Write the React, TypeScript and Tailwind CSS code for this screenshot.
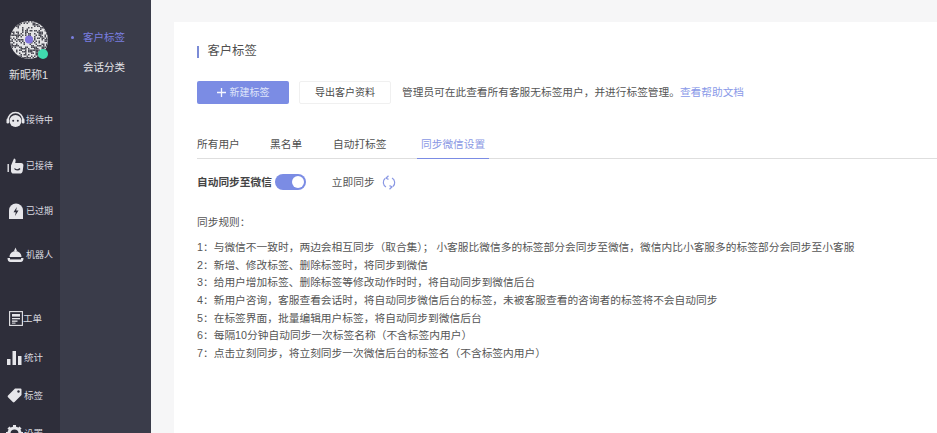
import React from "react";

function QR() {
  const cells: React.ReactNode[] = [];
  let s = 12345;
  for (let y = 0; y < 38; y += 1.5) {
    for (let x = 0; x < 38; x += 1.5) {
      s = (s * 1103515245 + 12345) & 0x7fffffff;
      if ((s >> 16) % 100 < 45) {
        cells.push(<rect key={x + "-" + y} x={x} y={y} width="1.5" height="1.5" fill="#4a4a54" />);
      }
    }
  }
  return (
    <svg width="38" height="38" viewBox="0 0 38 38" className="block">
      <defs>
        <clipPath id="qr"><circle cx="19" cy="19" r="19" /></clipPath>
      </defs>
      <g clipPath="url(#qr)">
        <rect width="38" height="38" fill="#e4e4e6" />
        {cells}
      </g>
      <circle cx="19" cy="18.5" r="4" fill="#8173dd" />
    </svg>
  );
}

const Headset = () => (
  <svg width="19" height="17" viewBox="0 0 19 17">
    <path d="M2 9a7.500 7.500 0 0 1 15 0" fill="none" stroke="#e6e6ea" strokeWidth="1.600" />
    <rect x="0.500" y="7.500" width="2.600" height="5" rx="1.200" fill="#e6e6ea" />
    <rect x="15.900" y="7.500" width="2.600" height="5" rx="1.200" fill="#e6e6ea" />
    <ellipse cx="9.500" cy="10" rx="6" ry="6" fill="#e6e6ea" />
    <circle cx="7.200" cy="9.800" r="1" fill="#2e2e3a" />
    <circle cx="11.800" cy="9.800" r="1" fill="#2e2e3a" />
  </svg>
);
const Thumb = () => (
  <svg width="17" height="17" viewBox="0 0 17 17">
    <rect x="0.500" y="7" width="1.400" height="8" fill="#e6e6ea" />
    <path d="M4 8.500 7 1.500c1.200 0 1.800 1 1.600 2.400L8.200 6H14c1.600 0 2.600 1 2.400 2.600l-.7 5.400c-.2 1.600-1.400 2.600-3 2.600H6.500C5 16.600 4 15.500 4 14z" fill="#e6e6ea" />
    <path d="M7.500 11.500c1.200 1.800 4.200 1.800 5.500 0" fill="none" stroke="#2e2e3a" strokeWidth="1.300" />
  </svg>
);
const Expired = () => (
  <svg width="16" height="16" viewBox="0 0 16 16">
    <path d="M1 16V7.500a7 7 0 0 1 14 0V16z" fill="#e6e6ea" />
    <path d="M8.800 4 5.500 9.200h2.300L7 13l3.500-5.400H8.200z" fill="#2e2e3a" />
  </svg>
);
const Bell = () => (
  <svg width="17" height="16" viewBox="0 0 17 16">
    <path d="M8.500 0.500 10 4H7z" fill="#e6e6ea" />
    <path d="M2.500 10a6 6 0 0 1 12 0z" fill="#e6e6ea" />
    <path d="M0.500 11h16c0 2.500-1 4-3 4H3.500c-2 0-3-1.500-3-4z" fill="#e6e6ea" />
    <rect x="3" y="11" width="11" height="1.400" fill="#2e2e3a" />
  </svg>
);
const Ticket = () => (
  <svg width="14" height="15" viewBox="0 0 14 15">
    <rect x="0.600" y="0.600" width="12.800" height="13.800" fill="none" stroke="#e6e6ea" strokeWidth="1.100" />
    <rect x="3" y="3" width="8" height="2.600" fill="#e6e6ea" />
    <rect x="3" y="7" width="8" height="1.300" fill="#e6e6ea" />
    <rect x="3" y="9.500" width="5.500" height="1.300" fill="#e6e6ea" />
    <rect x="3" y="11.600" width="3.500" height="1" fill="#e6e6ea" />
  </svg>
);
const Bars = () => (
  <svg width="15" height="14" viewBox="0 0 15 14">
    <rect x="0" y="8" width="3.500" height="6" fill="#e6e6ea" />
    <rect x="5.500" y="0" width="3.500" height="14" fill="#e6e6ea" />
    <rect x="11" y="5" width="3.500" height="9" fill="#e6e6ea" />
  </svg>
);
const Tag = () => (
  <svg width="15" height="15" viewBox="0 0 15 15">
    <path d="M8 0.500h5.500a1 1 0 0 1 1 1V7L7.500 14a1.200 1.200 0 0 1-1.700 0L1 9.200a1.200 1.200 0 0 1 0-1.700z" fill="#e6e6ea" />
    <circle cx="11.500" cy="3.500" r="1.200" fill="#2e2e3a" />
  </svg>
);
const Gear = () => (
  <svg width="17" height="17" viewBox="0 0 17 17">
    <circle cx="8.500" cy="8.500" r="5.500" fill="none" stroke="#e6e6ea" strokeWidth="3" />
    <g stroke="#e6e6ea" strokeWidth="3">
      <path d="M8.500 0v3M8.500 14v3M0 8.500h3M14 8.500h3M2.500 2.500l2 2M12.500 12.500l2 2M14.500 2.500l-2 2M4.500 12.500l-2 2" />
    </g>
  </svg>
);

function NavItem({ icon, label, cls, labelCls }: { icon: React.ReactNode; label: string; cls: string; labelCls: string }) {
  return (
    <div className={`flex items-center justify-start ${cls}`}>
      <span className="flex items-center justify-center w-[19px] shrink-0">{icon}</span>
      <span className={`leading-[14px] text-[#dcdce0] whitespace-nowrap ${labelCls}`}>{label}</span>
    </div>
  );
}

const rules = [
  "1：与微信不一致时，两边会相互同步（取合集）； 小客服比微信多的标签部分会同步至微信，微信内比小客服多的标签部分会同步至小客服",
  "2：新增、修改标签、删除标签时，将同步到微信",
  "3：给用户增加标签、删除标签等修改动作时时，将自动同步到微信后台",
  "4：新用户咨询，客服查看会话时，将自动同步微信后台的标签，未被客服查看的咨询者的标签将不会自动同步",
  "5：在标签界面，批量编辑用户标签，将自动同步到微信后台",
  "6：每隔10分钟自动同步一次标签名称（不含标签内用户）",
  "7：点击立刻同步，将立刻同步一次微信后台的标签名（不含标签内用户）",
];

export default function App() {
  return (
    <div
      className="flex w-[937px] h-[433px] overflow-hidden bg-[#f6f6f7] text-[#4a4a4a]"
      style={{ fontFamily: '"Liberation Sans", "Noto Sans CJK SC", sans-serif' }}
    >
      <aside className="w-[60px] shrink-0 bg-[#2e2e3a] flex flex-col pt-[21px] pl-[6px]">
        <div className="relative w-[38px] h-[38px] ml-[4px]">
          <QR />
          <span className="absolute right-0 bottom-0 w-[10px] h-[10px] rounded-full bg-[#3fdcae]" />
        </div>
        <div className="text-[11px] leading-[14px] text-[#e0e0e4] mt-[9px] ml-[3px] whitespace-nowrap">新昵称1</div>
        <NavItem icon={<Headset />} label="接待中" cls="mt-[29px] gap-[1px]" labelCls="text-[9px]" />
        <NavItem icon={<Thumb />} label="已接待" cls="mt-[29px] gap-[1px]" labelCls="text-[9px]" />
        <NavItem icon={<Expired />} label="已过期" cls="mt-[29px] gap-[1px]" labelCls="text-[9px]" />
        <NavItem icon={<Bell />} label="机器人" cls="mt-[28px] gap-[1px]" labelCls="text-[9px]" />
        <NavItem icon={<Ticket />} label="工单" cls="mt-[48px]" labelCls="text-[9.500px] -ml-[2px]" />
        <NavItem icon={<Bars />} label="统计" cls="mt-[25px] -ml-[1px]" labelCls="text-[9.500px]" />
        <NavItem icon={<Tag />} label="标签" cls="mt-[23px] -ml-[1px]" labelCls="text-[9.500px]" />
        <NavItem icon={<Gear />} label="设置" cls="mt-[22px] -ml-[1px]" labelCls="text-[9.500px]" />
      </aside>

      <nav className="w-[91px] shrink-0 bg-[#3a3c4a] pt-[30px] text-[10.500px] leading-[14px]">
        <div className="flex items-center text-[#7a7fe0]">
          <span className="w-[3px] h-[3px] rounded-full bg-[#7a7fe0] ml-[11px] mr-[9px]" />
          客户标签
        </div>
        <div className="text-[#e6e6ea] mt-[16px] ml-[23px]">会话分类</div>
      </nav>

      <main className="flex-1 min-w-0 pl-[23px] pt-[22px]">
        <div className="bg-white h-full pl-[23px] pt-[23px]">
          <div className="flex items-center h-[13px]">
            <span className="w-[1.500px] h-[12px] bg-[#7b8bd6]" />
            <span className="ml-[9px] text-[12.300px] leading-[13px] text-[#4f4f4f]">客户标签</span>
          </div>

          <div className="flex items-center mt-[23px] h-[23px]">
            <button className="w-[92px] h-[23px] rounded-[2px] bg-[#7b8ce4] text-[#dfe4fa] text-[10px] flex items-center justify-center gap-[4px]">
              <svg width="9" height="9" viewBox="0 0 9 9"><path d="M4.500 0v9M0 4.500h9" stroke="#f4f6ff" strokeWidth="1.300" /></svg>
              新建标签
            </button>
            <button className="w-[92px] h-[23px] ml-[10px] rounded-[2px] border border-[#f0f0f0] bg-white text-[#4a4a4a] text-[10px]">
              导出客户资料
            </button>
            <p className="ml-[11px] text-[10.700px] whitespace-nowrap text-[#555]">
              管理员可在此查看所有客服无标签用户，并进行标签管理。<span className="text-[#8a9ae8]">查看帮助文档</span>
            </p>
          </div>

          <div className="flex items-end mt-[30px] h-[25px] border-b border-[#dedede] text-[10.700px] leading-[14px] text-[#4f4f4f]">
            <span className="pb-[7px] w-[73px]">所有用户</span>
            <span className="pb-[7px] w-[63px]">黑名单</span>
            <span className="pb-[7px] w-[84px]">自动打标签</span>
            <span className="pb-[7px] px-[4px] w-[72px] -mb-px border-b border-[#7b8ce4] text-[#8a98e4] whitespace-nowrap">同步微信设置</span>
          </div>

          <div className="flex items-center mt-[15px] h-[16px] text-[10.700px]">
            <span className="font-bold text-[#444] whitespace-nowrap">自动同步至微信</span>
            <span className="relative ml-[3px] w-[31px] h-[16px] rounded-full bg-[#7b8ce4]">
              <span className="absolute right-[2px] top-[2px] w-[12px] h-[12px] rounded-full bg-white" />
            </span>
            <span className="ml-[26px] text-[#555] whitespace-nowrap">立即同步</span>
            <svg className="ml-[7px]" width="14" height="15" viewBox="0 0 14 15" fill="none" stroke="#8a98e4" strokeWidth="1.200">
              <path d="M3 3.500A5.300 5.300 0 0 0 4 12" />
              <path d="M11 11.500A5.300 5.300 0 0 0 10 3" />
              <path d="M6.500 0.800 4 3.200l2.500 1.200M7.500 14.200l2.500-2.400-2.500-1.200" />
            </svg>
          </div>

          <div className="mt-[25px] text-[10.700px] leading-[14px] text-[#555]">同步规则：</div>
          <div className="mt-[10px] flex flex-col text-[10.720px] leading-[17.650px] text-[#555]">
            {rules.map((r) => (
              <div key={r} className="whitespace-nowrap">{r}</div>
            ))}
          </div>
        </div>
      </main>
    </div>
  );
}
